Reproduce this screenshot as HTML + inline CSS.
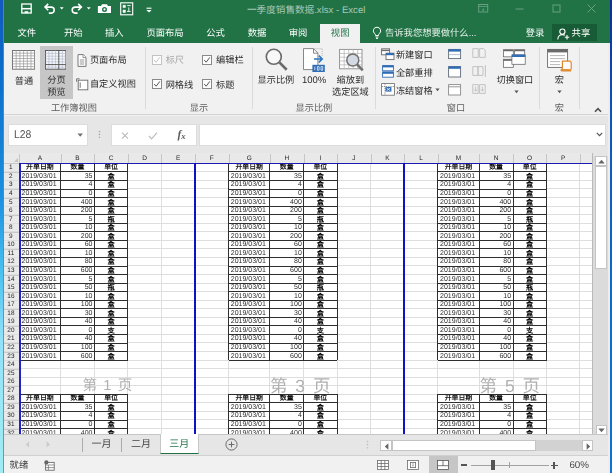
<!DOCTYPE html>
<html lang="zh-CN">
<head>
<meta charset="utf-8">
<title>一季度销售数据.xlsx - Excel</title>
<style>
html,body{margin:0;padding:0;}
body{width:612px;height:473px;overflow:hidden;position:relative;background:#f1f1f1;font-family:"Liberation Sans",sans-serif;font-size:9.4px;color:#333;text-rendering:geometricPrecision;filter:blur(0.4px);}
div,span,svg{position:absolute;box-sizing:border-box;}
.t{white-space:nowrap;line-height:12px;height:12px;}
.ct{text-align:center;}
/* window edges */
#edgeL{left:0;top:0;width:3.8px;height:473px;background:linear-gradient(180deg,#1458c0 0,#0a6ac8 13%,#1a90e0 42%,#45c0f0 57%,#92e2fa 72%,#a0ecf4 100%);border-right:0.7px solid rgba(110,135,145,.85);z-index:5;}
#edgeR{left:610px;top:0;width:2px;height:473px;background:linear-gradient(180deg,#0c2c9a 0,#0a58b8 25%,#0a6cd0 65%,#0a72d8 100%);z-index:5;}
#edgeR2{left:608.4px;top:43px;width:1.6px;height:430px;background:#f2ebe7;z-index:5;}
/* title bar */
#title{left:3.4px;top:0;width:607.6px;height:42.8px;background:#217346;}
#title .cap{left:182.8px;top:5px;width:240px;text-align:center;color:#a9c8b7;font-size:9.6px;}
.tab{top:27.2px;color:#fff;font-size:9.3px;text-align:center;width:50px;}
#tabact{left:316.5px;top:24px;width:40.5px;height:20px;background:#f1f1f1;}
#tabact .t{left:0;top:3.3px;width:40.5px;text-align:center;color:#217346;font-size:9.3px;}
#share{left:548.6px;top:24.4px;width:45.2px;height:16.8px;background:#185c37;}
/* ribbon */
#ribbon{left:3.4px;top:42.8px;width:607.6px;height:72.7px;background:#f1f1f1;border-bottom:1px solid #d4d4d4;}
.sep{width:1px;top:4px;height:62px;background:#dadada;}
.gl{top:58.8px;color:#5d5d5d;font-size:9.2px;text-align:center;width:80px;}
.rl{color:#2b2b2b;font-size:9.2px;}
.cb{width:10px;height:10px;border:1px solid #8a8a8a;background:#fdfdfd;}
.cb.dis{border-color:#c2c2c2;}
/* formula bar */
#fbar{left:3.4px;top:116px;width:607px;height:37px;background:#e6e6e6;}
.wb{background:#fff;border:1px solid #dcdcdc;}
/* sheet */
.sheet{background:#fff;overflow:hidden;}
.colhdr,.rowhdr{background:#e9e9e9;}
.corner{width:0;height:0;border-left:4.5px solid transparent;border-bottom:4.5px solid #c4c4c4;}
.cl{font-size:6.5px;line-height:12.6px;text-align:center;color:#2a2a2a;}
.cs{width:1px;background:#c6c6c6;}
.gv{width:1px;background:#dedede;margin-left:-0.5px;}
.gh{height:1px;background:#dedede;margin-top:-0.5px;}
.rn{left:-0.5px;font-size:6.4px;line-height:8.3px;text-align:center;color:#262626;border-top:1px solid #c9c9c9;}
.c{font-size:7px;line-height:9.8px;height:8.555px;color:#2c2c2c;padding:0 2.2px;white-space:nowrap;overflow:hidden;background:#fff;}
.c.num{font-size:7px;padding-right:1.9px;}
.c.u{font-weight:bold;color:#000;font-size:7.2px;}
.c.hc{font-size:6.9px;font-weight:bold;color:#111;line-height:9.6px;}
.bh{height:0.9px;background:#2e2e2e;}
.bv{width:0.9px;background:#2e2e2e;}
.pg{line-height:24px;color:#b0b0b0;text-align:center;white-space:nowrap;}
.bl{background:#1010c8;}
/* bottom */
#tabbar{left:3.4px;top:434.2px;width:607px;height:21px;background:#e6e6e6;border-top:1px solid #c6c6c6;}
#status{left:3.4px;top:455px;width:607px;height:18px;background:#f1f1f1;border-top:1px solid #d0d0d0;}
#vscroll{left:592.2px;top:153px;width:16.3px;height:282px;background:#dbdbdb;border-left:1.6px solid #b9b9b9;}
.sbtn{background:#fff;border:1px solid #c4c4c4;}
</style>
</head>
<body>
<div id="edgeL"></div><div id="edgeR"></div><div id="edgeR2"></div>

<!-- ===== title bar + tabs ===== -->
<div id="title">
  <!-- quick access toolbar -->
  <svg style="left:16.3px;top:2px" width="150" height="16" viewBox="0 0 150 16" fill="none" stroke="#fff" stroke-width="1.3">
    <!-- save -->
    <rect x="1.8" y="2" width="9.4" height="9"/><path d="M1.8 6.7h9.4" stroke-width="1.5"/><rect x="4.6" y="9.2" width="3.6" height="2" fill="#fff" stroke="none"/>
    <!-- undo -->
    <path d="M28.2 1.9L25 5.1l3.2 3.1M25.4 5.1h5.8a3 3 0 0 1 0 6h-2.4" stroke-width="1.55"/>
    <path d="M39.8 5.3h3.9l-1.95 2.2z" fill="#fff" stroke="none"/>
    <!-- redo -->
    <path d="M58.2 1.9l3.2 3.2-3.2 3.1M61 5.1h-5.8a3 3 0 0 0 0 6h2.4" stroke-width="1.55"/>
    <path d="M66.8 5.3h3.9l-1.95 2.2z" fill="#fff" stroke="none"/>
    <!-- camera -->
    <path d="M77.9 4h3.2l.9-1.8h5l.9 1.8H91v7H77.9z" fill="#fff" stroke="none"/><circle cx="84.5" cy="7.4" r="2.5" fill="#217346" stroke="none"/><circle cx="84.5" cy="7.4" r="1.1" fill="#fff" stroke="none"/>
    <!-- grid icon -->
    <rect x="100.7" y="0.8" width="12" height="12" stroke-width="1.1"/><path d="M103 3.2h2.4v2.4H103zM103 8h2.4v2.4H103z" fill="#fff" stroke-width="0.5"/><path d="M107.2 3.6h3.4M108.8 5.4v3.8M107 9.4h3.6" stroke-width="0.9"/>
    <!-- customize -->
    <path d="M126.5 6.2h5" stroke-width="1.1"/><path d="M126.4 8h5.2l-2.6 2.6z" fill="#fff" stroke="none"/>
  </svg>
  <div class="t cap">一季度销售数据.xlsx - Excel</div>
  <!-- window controls -->
  <svg style="left:471px;top:2.4px" width="130" height="14" viewBox="0 0 130 14" fill="none" stroke="#67a082" stroke-width="1">
    <g transform="translate(1.2 0)"><rect x="3.5" y="2.5" width="9" height="7.5"/><path d="M3.5 4.5h9M8 6v2.6M6.7 7.6L8 9l1.3-1.4" stroke-width="0.8"/></g>
    <path d="M41.5 7h8"/>
    <rect x="79" y="3" width="7" height="7"/>
    <path d="M113.5 2.5l8 8M121.5 2.5l-8 8"/>
  </svg>
  <!-- tabs -->
  <div class="t tab" style="left:-1.7px">文件</div>
  <div class="t tab" style="left:44.8px">开始</div>
  <div class="t tab" style="left:85.8px">插入</div>
  <div class="t tab" style="left:136.6px">页面布局</div>
  <div class="t tab" style="left:187.2px">公式</div>
  <div class="t tab" style="left:228.6px">数据</div>
  <div class="t tab" style="left:269.6px">审阅</div>
  <div id="tabact"><div class="t">视图</div></div>
  <svg style="left:367.4px;top:26.3px" width="12" height="14" viewBox="0 0 12 14" fill="none" stroke="#fff" stroke-width="1"><path d="M6 1.2a3.6 3.6 0 0 0-2.2 6.5c.5.5.7 1 .7 1.8h3c0-.8.2-1.3.7-1.8A3.6 3.6 0 0 0 6 1.2zM4.6 11h2.8M5 12.4h2"/></svg>
  <div class="t tab" style="left:381.6px;width:100px;text-align:left;color:#e4f0e9">告诉我您想要做什么...</div>
  <div class="t tab" style="left:506.6px">登录</div>
  <div id="share">
    <svg style="left:5px;top:3.4px" width="13" height="12" viewBox="0 0 13 12" fill="none" stroke="#fff" stroke-width="1.1"><circle cx="5.4" cy="3.6" r="2.6"/><path d="M0.8 11.4c0-3 2-4.8 4.6-4.8 1 0 1.8.2 2.5.7M10 7v4.4M7.8 9.2h4.4"/></svg>
    <div class="t" style="left:19.6px;top:3px;color:#fff;font-size:9.4px">共享</div>
  </div>
</div>

<!-- ===== ribbon ===== -->
<div id="ribbon"><div id="rin" style="left:0;top:0.7px">
  <!-- 普通 -->
  <svg style="left:8.3px;top:6.5px" width="23.2" height="19.7" viewBox="0 0 23.2 19.7" fill="#fff" stroke="#747474" stroke-width="1"><rect x="0.5" y="0.5" width="22.2" height="18.7"/><path d="M4.20 .5v18.7 M7.90 .5v18.7 M11.60 .5v18.7 M15.30 .5v18.7 M19.00 .5v18.7 M.5 3.17h22.2 M.5 5.84h22.2 M.5 8.51h22.2 M.5 11.19h22.2 M.5 13.86h22.2 M.5 16.53h22.2" stroke="#9c9c9c" stroke-width="0.75"/></svg>
  <div class="t rl ct" style="left:0.5px;top:31.5px;width:40px">普通</div>
  <!-- 分页预览 (selected) -->
  <div style="left:36.8px;top:2.3px;width:32.4px;height:53.4px;background:#c6c6c6"></div>
  <svg style="left:41.7px;top:6.5px" width="21.4" height="19.7" viewBox="0 0 21.4 19.7" fill="#f4f7fb" stroke="#5c5c5c" stroke-width="1"><rect x="0.5" y="0.5" width="20.4" height="18.7"/><path d="M3.9 .5v18.7 M7.2 .5v18.7 M10.5 .5v18.7 M17.4 .5v18.7 M.5 3.4h20.4 M.5 6.2h20.4 M.5 9h20.4 M.5 11.8h20.4 M.5 17.2h20.4" stroke="#b4bccb" stroke-width="0.7"/><path d="M13.8 .5v18.7M.5 14.6h20.4" stroke="#5c5c5c" stroke-width="1"/></svg>
  <div class="t rl ct" style="left:33px;top:30.5px;width:40px">分页</div>
  <div class="t rl ct" style="left:33px;top:42.5px;width:40px">预览</div>
  <!-- 页面布局 -->
  <svg style="left:73.3px;top:10.2px" width="10" height="13" viewBox="0 0 10 13" fill="#fff" stroke="#6a6a6a" stroke-width="0.9"><path d="M1 .6h5.2l2.8 2.8v9H1z"/><path d="M6 .8v2.8h2.8M2.8 6h4.4M2.8 8h4.4M2.8 10h4.4" stroke-width="0.7"/></svg>
  <div class="t rl" style="left:86.5px;top:10.5px">页面布局</div>
  <!-- 自定义视图 -->
  <svg style="left:73px;top:34.5px" width="13" height="13" viewBox="0 0 13 13" fill="none" stroke="#6a6a6a" stroke-width="0.9"><rect x="2.2" y="2.2" width="9.6" height="9.6" fill="#fff"/><path d="M.6 3.8V.8h3M4.2 4.4v5.4"/></svg>
  <div class="t rl" style="left:86.5px;top:35px">自定义视图</div>
  <div class="t gl" style="left:30.5px">工作簿视图</div>
  <div class="sep" style="left:142px"></div>

  <!-- checkboxes -->
  <div class="cb dis" style="left:148.4px;top:11.5px"></div>
  <svg style="left:149.4px;top:12.5px" width="8" height="8" viewBox="0 0 8 8" fill="none" stroke="#c6c6c6" stroke-width="1"><path d="M1.2 4l2 2.2L6.8 1.4"/></svg>
  <div class="t rl" style="left:162.3px;top:11px;color:#a6a6a6">标尺</div>
  <div class="cb" style="left:198.4px;top:11.5px"></div>
  <svg style="left:199.4px;top:12.5px" width="8" height="8" viewBox="0 0 8 8" fill="none" stroke="#555" stroke-width="1"><path d="M1.2 4l2 2.2L6.8 1.4"/></svg>
  <div class="t rl" style="left:212.7px;top:11px">编辑栏</div>
  <div class="cb" style="left:148.4px;top:35.7px"></div>
  <svg style="left:149.4px;top:36.7px" width="8" height="8" viewBox="0 0 8 8" fill="none" stroke="#555" stroke-width="1"><path d="M1.2 4l2 2.2L6.8 1.4"/></svg>
  <div class="t rl" style="left:162.3px;top:35.5px">网格线</div>
  <div class="cb" style="left:198.4px;top:35.7px"></div>
  <svg style="left:199.4px;top:36.7px" width="8" height="8" viewBox="0 0 8 8" fill="none" stroke="#555" stroke-width="1"><path d="M1.2 4l2 2.2L6.8 1.4"/></svg>
  <div class="t rl" style="left:212.7px;top:35.5px">标题</div>
  <div class="t gl" style="left:155.5px">显示</div>
  <div class="sep" style="left:249px"></div>

  <!-- 显示比例 -->
  <svg style="left:260.5px;top:3.6px" width="25" height="25" viewBox="0 0 24 24" fill="none" stroke="#6b6b6b"><circle cx="9.4" cy="9.4" r="7.2" stroke-width="1.6" fill="#f8f8f8"/><path d="M14.8 14.8l7 7" stroke-width="2.6"/></svg>
  <div class="t rl ct" style="left:247.5px;top:31px;width:50px">显示比例</div>
  <!-- 100% -->
  <svg style="left:299px;top:4.5px" width="25" height="25" viewBox="0 0 25 25" fill="none" stroke="#7a7a7a" stroke-width="0.9"><path d="M1.5 .6h10l4.4 4.4v16.6H1.5z" fill="#fff"/><path d="M11.5 .8v4.4h4.2" /><path d="M12.5 .6h7.7v8" stroke="#b0b0b0" stroke-dasharray="1 1"/><path d="M12 11h8M16.8 7.6l3.4 3.4-3.4 3.4" stroke="#2b76c4" stroke-width="1.6"/><rect x="10.4" y="16.8" width="12.4" height="7.2" fill="#2f6db5" stroke="none"/><path d="M12.8 18.6v3.6M15.4 18.6h1.7v3.6h-1.7zM19 18.6h1.7v3.6H19z" stroke="#fff" stroke-width="0.7"/></svg>
  <div class="t rl ct" style="left:285.7px;top:32px;width:50px;font-size:9.5px">100%</div>
  <!-- 缩放到选定区域 -->
  <svg style="left:335.5px;top:5px" width="26" height="25" viewBox="0 0 26 25" fill="none" stroke="#8a8a8a" stroke-width="0.9"><rect x=".6" y="1.4" width="22.4" height="19.4" fill="#fff"/><path d="M.6 5.4h22.4M.6 9.2h22.4M.6 13h22.4M.6 16.8h22.4M5.2 1.4v19.4M9.7 1.4v19.4M14.2 1.4v19.4M18.7 1.4v19.4" stroke="#b0b0b0" stroke-width="0.7"/><circle cx="13.8" cy="12" r="6" fill="#d3dae4" stroke="#707070" stroke-width="1.5"/><path d="M18.2 16.6l5.6 5.8" stroke="#707070" stroke-width="2.5"/></svg>
  <div class="t rl ct" style="left:322px;top:31px;width:50px">缩放到</div>
  <div class="t rl ct" style="left:322px;top:42.5px;width:50px">选定区域</div>
  <div class="t gl" style="left:270.5px">显示比例</div>
  <div class="sep" style="left:371.6px"></div>

  <!-- window group -->
  <svg style="left:377.5px;top:4.7px" width="14" height="13" viewBox="0 0 14 13" fill="#fff" stroke="#6a6a6a" stroke-width="0.9"><rect x=".6" y=".8" width="8" height="6"/><path d="M.6 2.4h8" stroke-width="1.4"/><rect x="5" y="5.2" width="8" height="6.4"/><rect x="5" y="5" width="8" height="2.2" fill="#2f6db5" stroke="none"/></svg>
  <div class="t rl" style="left:392.5px;top:5.4px">新建窗口</div>
  <svg style="left:378.5px;top:22px" width="12" height="13" viewBox="0 0 12 13" fill="#fff" stroke="#2f6db5" stroke-width="0.9"><rect x=".6" y=".6" width="10.8" height="5.2"/><rect x=".6" y=".4" width="10.8" height="2" fill="#2f6db5" stroke="none"/><rect x=".6" y="7" width="10.8" height="5.2"/><rect x=".6" y="6.8" width="10.8" height="2" fill="#2f6db5" stroke="none"/></svg>
  <div class="t rl" style="left:392.5px;top:23.6px">全部重排</div>
  <svg style="left:377.5px;top:39.5px" width="14" height="13" viewBox="0 0 14 13" fill="#fff" stroke="#6a6a6a" stroke-width="0.8"><rect x=".6" y=".6" width="12.8" height="11.6"/><path d="M.6 3.6h12.8M4 .6v11.6" stroke-dasharray="1.2 1"/><rect x="4.4" y="4" width="6" height="4.6" fill="#2f6db5" stroke="none"/><path d="M5.6 5l3.6 2.6M9.2 5L5.6 7.6" stroke="#fff" stroke-width="0.7"/></svg>
  <div class="t rl" style="left:392.5px;top:41.6px">冻结窗格</div>
  <svg style="left:431.5px;top:45px" width="5" height="4" viewBox="0 0 5 4"><path d="M.4.6h4.2L2.5 3.2z" fill="#555"/></svg>

  <svg style="left:444.5px;top:4.4px" width="14" height="48" viewBox="0 0 14 48" fill="#fff" stroke="#5f6b7a" stroke-width="0.9"><rect x=".6" y="1.4" width="12" height="9.2"/><rect x=".6" y="1.2" width="12" height="2.4" fill="#2f6db5" stroke="none"/><path d="M.6 6.6h12" stroke="#9aa7b8" stroke-width="0.7"/><rect x=".6" y="18.6" width="12" height="10.4"/><rect x=".6" y="18.4" width="12" height="2.4" fill="#2f6db5" stroke="none"/><rect x=".6" y="36.6" width="12" height="10.4" stroke="#8a8a8a"/><path d="M.6 38.8h12" stroke="#8a8a8a"/></svg>
  <svg style="left:468.5px;top:4px" width="15" height="48" viewBox="0 0 15 48" fill="none" stroke="#bdbdbd" stroke-width="0.9"><path d="M.8 1.6h5.4v8.8H.8zM7.6 1.6h4l1.6 1.6v7.2H7.6z"/><path d="M.8 19.6h5.2v8.8H.8zM6 19.6h5v8.8H6zM13.4 18v12"/><path d="M.8 37.6h5.4v8.8H.8zM7.6 37.6h5.6v8.8H7.6zM3.6 39.6v4.4M10.4 39.6v4.4M2.2 42.6l1.4 1.6 1.4-1.6M9 42.6l1.4 1.6 1.4-1.6" /></svg>

  <!-- 切换窗口 -->
  <svg style="left:499.2px;top:5.6px" width="24" height="19.6" viewBox="0 0 27 22" fill="#fff" stroke="#6a6a6a" stroke-width="0.9"><rect x=".6" y=".8" width="11" height="8"/><path d="M.6 1.6h11" stroke-width="1.8"/><rect x="13" y=".8" width="11.4" height="8"/><path d="M13 1.6h11.4" stroke-width="1.8"/><rect x=".6" y="11.6" width="11" height="9"/><path d="M.6 12.4h11" stroke-width="1.8"/><rect x="10" y="6.6" width="15" height="10.6"/><rect x="10" y="6.2" width="15" height="2.8" fill="#2f6db5" stroke="none"/></svg>
  <div class="t rl ct" style="left:486.5px;top:31px;width:50px">切换窗口</div>
  <svg style="left:510.3px;top:46.5px" width="5" height="4" viewBox="0 0 5 4"><path d="M.4.6h4.2L2.5 3.2z" fill="#555"/></svg>
  <div class="t gl" style="left:412.5px">窗口</div>
  <div class="sep" style="left:535.2px"></div>

  <!-- 宏 -->
  <svg style="left:544px;top:5px" width="27" height="24" viewBox="0 0 27 24" fill="#fff" stroke="#6a6a6a" stroke-width="0.9"><rect x=".6" y="1.4" width="20" height="18"/><rect x=".6" y="1" width="20" height="3.4" fill="#6a6a6a" stroke="none"/><path d="M3 7.6h15M3 10.6h15M3 13.6h10M3 16.6h10" stroke="#a5a5a5" stroke-width="0.8"/><path d="M15.4 13.2h7.6l1.2 1.2v6.6c-1.6.2-1.6 1.8 0 1.8h-8.8c-1.8 0-1.8-1.8 0-1.8z" fill="#fff" stroke="#e08a2c" stroke-width="1.2"/><path d="M14.4 22h8.4" stroke="#e08a2c" stroke-width="1.8"/></svg>
  <div class="t rl ct" style="left:531px;top:31px;width:50px">宏</div>
  <svg style="left:554px;top:46.5px" width="5" height="4" viewBox="0 0 5 4"><path d="M.4.6h4.2L2.5 3.2z" fill="#555"/></svg>
  <div class="t gl" style="left:516px">宏</div>
  <div class="sep" style="left:575.5px"></div>
  <svg style="left:591px;top:63.2px" width="8" height="6" viewBox="0 0 8 6" fill="none" stroke="#505050" stroke-width="1.6"><path d="M1 4.8l3-3.2 3 3.2"/></svg>
</div></div>

<!-- ===== formula bar ===== -->
<div id="fbar">
  <div class="wb" style="left:4.6px;top:7.6px;width:79.8px;height:22.3px"></div>
  <div class="t" style="left:10.6px;top:12.6px;font-size:11.3px;color:#555;transform:scaleX(0.92);transform-origin:0 0">L28</div>
  <svg style="left:73.6px;top:17px" width="6.4" height="4.4" viewBox="0 0 7 5"><path d="M.4.6h6.2L3.5 4.2z" fill="#707070"/></svg>
  <svg style="left:94.4px;top:14.4px" width="3" height="9" viewBox="0 0 3 9" fill="#a8a8a8"><circle cx="1.5" cy="1.5" r=".8"/><circle cx="1.5" cy="4.4" r=".8"/><circle cx="1.5" cy="7.3" r=".8"/></svg>
  <div class="wb" style="left:107.6px;top:7.7px;width:86px;height:22.2px"></div>
  <svg style="left:117px;top:14.5px" width="70" height="10" viewBox="0 0 70 10" fill="none" stroke="#bcbcbc" stroke-width="1.2"><path d="M2 1.6l6 6M8 1.6l-6 6"/><path d="M29 5l2.6 2.8L37 1.6"/></svg>
  <div class="t" style="left:174.2px;top:12.6px;font-family:'Liberation Serif',serif;font-style:italic;font-weight:bold;font-size:11.5px;color:#5a5a5a;letter-spacing:-0.2px">f<span style="position:relative;font-size:8.6px;top:1px">x</span></div>
  <div class="wb" style="left:196px;top:7.7px;width:407px;height:22px"></div>
  <svg style="left:592.3px;top:15.6px" width="7" height="5" viewBox="0 0 7 5" fill="none" stroke="#555" stroke-width="1.2"><path d="M.8.8l2.7 2.8L6.2.8"/></svg>
</div>

<!-- ===== sheet ===== -->
<div class="sheet" style="left:3.5px;top:153px;width:590.0px;height:282px">
<div class="colhdr" style="left:0;top:0;width:590.0px;height:10.300000000000011px"></div>
<div class="rowhdr" style="left:0;top:10.300000000000011px;width:15.8px;height:271.7px"></div>
<div class="corner" style="left:10.3px;top:4.800000000000011px"></div>
<div class="cl" style="left:15.8px;top:0;width:41.2px;height:10.300000000000011px">A</div>
<div class="cs" style="left:15.8px;top:1px;height:9.300000000000011px"></div>
<div class="cl" style="left:57.0px;top:0;width:33.9px;height:10.300000000000011px">B</div>
<div class="cs" style="left:57.0px;top:1px;height:9.300000000000011px"></div>
<div class="cl" style="left:90.9px;top:0;width:33.3px;height:10.300000000000011px">C</div>
<div class="cs" style="left:90.9px;top:1px;height:9.300000000000011px"></div>
<div class="cl" style="left:124.2px;top:0;width:33.6px;height:10.300000000000011px">D</div>
<div class="cs" style="left:124.2px;top:1px;height:9.300000000000011px"></div>
<div class="cl" style="left:157.8px;top:0;width:33.5px;height:10.300000000000011px">E</div>
<div class="cs" style="left:157.8px;top:1px;height:9.300000000000011px"></div>
<div class="cl" style="left:191.3px;top:0;width:33.8px;height:10.300000000000011px">F</div>
<div class="cs" style="left:191.3px;top:1px;height:9.300000000000011px"></div>
<div class="cl" style="left:225.1px;top:0;width:41.2px;height:10.300000000000011px">G</div>
<div class="cs" style="left:225.1px;top:1px;height:9.300000000000011px"></div>
<div class="cl" style="left:266.3px;top:0;width:33.9px;height:10.300000000000011px">H</div>
<div class="cs" style="left:266.3px;top:1px;height:9.300000000000011px"></div>
<div class="cl" style="left:300.2px;top:0;width:33.3px;height:10.300000000000011px">I</div>
<div class="cs" style="left:300.2px;top:1px;height:9.300000000000011px"></div>
<div class="cl" style="left:333.5px;top:0;width:33.6px;height:10.300000000000011px">J</div>
<div class="cs" style="left:333.5px;top:1px;height:9.300000000000011px"></div>
<div class="cl" style="left:367.1px;top:0;width:33.5px;height:10.300000000000011px">K</div>
<div class="cs" style="left:367.1px;top:1px;height:9.300000000000011px"></div>
<div class="cl" style="left:400.6px;top:0;width:33.8px;height:10.300000000000011px">L</div>
<div class="cs" style="left:400.6px;top:1px;height:9.300000000000011px"></div>
<div class="cl" style="left:434.4px;top:0;width:41.2px;height:10.300000000000011px">M</div>
<div class="cs" style="left:434.4px;top:1px;height:9.300000000000011px"></div>
<div class="cl" style="left:475.6px;top:0;width:33.9px;height:10.300000000000011px">N</div>
<div class="cs" style="left:475.6px;top:1px;height:9.300000000000011px"></div>
<div class="cl" style="left:509.5px;top:0;width:33.3px;height:10.300000000000011px">O</div>
<div class="cs" style="left:509.5px;top:1px;height:9.300000000000011px"></div>
<div class="cl" style="left:542.8px;top:0;width:33.6px;height:10.300000000000011px">P</div>
<div class="cs" style="left:542.8px;top:1px;height:9.300000000000011px"></div>
<div class="cs" style="left:576.4px;top:1px;height:9.300000000000011px"></div>
<div class="gv" style="left:57.0px;top:10.300000000000011px;height:271.7px"></div>
<div class="gv" style="left:90.9px;top:10.300000000000011px;height:271.7px"></div>
<div class="gv" style="left:124.2px;top:10.300000000000011px;height:271.7px"></div>
<div class="gv" style="left:157.8px;top:10.300000000000011px;height:271.7px"></div>
<div class="gv" style="left:191.3px;top:10.300000000000011px;height:271.7px"></div>
<div class="gv" style="left:225.1px;top:10.300000000000011px;height:271.7px"></div>
<div class="gv" style="left:266.3px;top:10.300000000000011px;height:271.7px"></div>
<div class="gv" style="left:300.2px;top:10.300000000000011px;height:271.7px"></div>
<div class="gv" style="left:333.5px;top:10.300000000000011px;height:271.7px"></div>
<div class="gv" style="left:367.1px;top:10.300000000000011px;height:271.7px"></div>
<div class="gv" style="left:400.6px;top:10.300000000000011px;height:271.7px"></div>
<div class="gv" style="left:434.4px;top:10.300000000000011px;height:271.7px"></div>
<div class="gv" style="left:475.6px;top:10.300000000000011px;height:271.7px"></div>
<div class="gv" style="left:509.5px;top:10.300000000000011px;height:271.7px"></div>
<div class="gv" style="left:542.8px;top:10.300000000000011px;height:271.7px"></div>
<div class="gv" style="left:576.4px;top:10.300000000000011px;height:271.7px"></div>
<div class="rn" style="top:10.30px;height:8.55px;width:15.8px">1</div>
<div class="rn" style="top:18.86px;height:8.55px;width:15.8px">2</div>
<div class="gh" style="top:18.86px;left:0;width:590.0px"></div>
<div class="rn" style="top:27.41px;height:8.55px;width:15.8px">3</div>
<div class="gh" style="top:27.41px;left:0;width:590.0px"></div>
<div class="rn" style="top:35.97px;height:8.55px;width:15.8px">4</div>
<div class="gh" style="top:35.97px;left:0;width:590.0px"></div>
<div class="rn" style="top:44.52px;height:8.55px;width:15.8px">5</div>
<div class="gh" style="top:44.52px;left:0;width:590.0px"></div>
<div class="rn" style="top:53.08px;height:8.55px;width:15.8px">6</div>
<div class="gh" style="top:53.08px;left:0;width:590.0px"></div>
<div class="rn" style="top:61.63px;height:8.55px;width:15.8px">7</div>
<div class="gh" style="top:61.63px;left:0;width:590.0px"></div>
<div class="rn" style="top:70.19px;height:8.55px;width:15.8px">8</div>
<div class="gh" style="top:70.19px;left:0;width:590.0px"></div>
<div class="rn" style="top:78.74px;height:8.55px;width:15.8px">9</div>
<div class="gh" style="top:78.74px;left:0;width:590.0px"></div>
<div class="rn" style="top:87.30px;height:8.55px;width:15.8px">10</div>
<div class="gh" style="top:87.30px;left:0;width:590.0px"></div>
<div class="rn" style="top:95.85px;height:8.55px;width:15.8px">11</div>
<div class="gh" style="top:95.85px;left:0;width:590.0px"></div>
<div class="rn" style="top:104.40px;height:8.55px;width:15.8px">12</div>
<div class="gh" style="top:104.40px;left:0;width:590.0px"></div>
<div class="rn" style="top:112.96px;height:8.55px;width:15.8px">13</div>
<div class="gh" style="top:112.96px;left:0;width:590.0px"></div>
<div class="rn" style="top:121.51px;height:8.55px;width:15.8px">14</div>
<div class="gh" style="top:121.51px;left:0;width:590.0px"></div>
<div class="rn" style="top:130.07px;height:8.55px;width:15.8px">15</div>
<div class="gh" style="top:130.07px;left:0;width:590.0px"></div>
<div class="rn" style="top:138.62px;height:8.55px;width:15.8px">16</div>
<div class="gh" style="top:138.62px;left:0;width:590.0px"></div>
<div class="rn" style="top:147.18px;height:8.55px;width:15.8px">17</div>
<div class="gh" style="top:147.18px;left:0;width:590.0px"></div>
<div class="rn" style="top:155.74px;height:8.55px;width:15.8px">18</div>
<div class="gh" style="top:155.74px;left:0;width:590.0px"></div>
<div class="rn" style="top:164.29px;height:8.55px;width:15.8px">19</div>
<div class="gh" style="top:164.29px;left:0;width:590.0px"></div>
<div class="rn" style="top:172.85px;height:8.55px;width:15.8px">20</div>
<div class="gh" style="top:172.85px;left:0;width:590.0px"></div>
<div class="rn" style="top:181.40px;height:8.55px;width:15.8px">21</div>
<div class="gh" style="top:181.40px;left:0;width:590.0px"></div>
<div class="rn" style="top:189.96px;height:8.55px;width:15.8px">22</div>
<div class="gh" style="top:189.96px;left:0;width:590.0px"></div>
<div class="rn" style="top:198.51px;height:8.55px;width:15.8px">23</div>
<div class="gh" style="top:198.51px;left:0;width:590.0px"></div>
<div class="rn" style="top:207.06px;height:8.55px;width:15.8px">24</div>
<div class="gh" style="top:207.06px;left:0;width:590.0px"></div>
<div class="rn" style="top:215.62px;height:8.55px;width:15.8px">25</div>
<div class="gh" style="top:215.62px;left:0;width:590.0px"></div>
<div class="rn" style="top:224.18px;height:8.55px;width:15.8px">26</div>
<div class="gh" style="top:224.18px;left:0;width:590.0px"></div>
<div class="rn" style="top:232.73px;height:8.55px;width:15.8px">27</div>
<div class="gh" style="top:232.73px;left:0;width:590.0px"></div>
<div class="rn" style="top:241.28px;height:8.55px;width:15.8px">28</div>
<div class="gh" style="top:241.28px;left:0;width:590.0px"></div>
<div class="rn" style="top:249.84px;height:8.55px;width:15.8px">29</div>
<div class="gh" style="top:249.84px;left:0;width:590.0px"></div>
<div class="rn" style="top:258.39px;height:8.55px;width:15.8px">30</div>
<div class="gh" style="top:258.39px;left:0;width:590.0px"></div>
<div class="rn" style="top:266.95px;height:8.55px;width:15.8px">31</div>
<div class="gh" style="top:266.95px;left:0;width:590.0px"></div>
<div class="rn" style="top:275.50px;height:6.50px;width:15.8px">32</div>
<div class="gh" style="top:275.50px;left:0;width:590.0px"></div>
<div class="c hc" style="left:15.8px;top:10.30px;width:41.2px;text-align:center">开单日期</div>
<div class="c hc " style="left:57.0px;top:10.30px;width:33.9px;text-align:center">数量</div>
<div class="c hc " style="left:90.9px;top:10.30px;width:33.3px;text-align:center">单位</div>
<div class="c " style="left:15.8px;top:18.86px;width:41.2px;text-align:left">2019/03/01</div>
<div class="c  num" style="left:57.0px;top:18.86px;width:33.9px;text-align:right">35</div>
<div class="c  u" style="left:90.9px;top:18.86px;width:33.3px;text-align:center">盒</div>
<div class="c " style="left:15.8px;top:27.41px;width:41.2px;text-align:left">2019/03/01</div>
<div class="c  num" style="left:57.0px;top:27.41px;width:33.9px;text-align:right">4</div>
<div class="c  u" style="left:90.9px;top:27.41px;width:33.3px;text-align:center">盒</div>
<div class="c " style="left:15.8px;top:35.97px;width:41.2px;text-align:left">2019/03/01</div>
<div class="c  num" style="left:57.0px;top:35.97px;width:33.9px;text-align:right">0</div>
<div class="c  u" style="left:90.9px;top:35.97px;width:33.3px;text-align:center">盒</div>
<div class="c " style="left:15.8px;top:44.52px;width:41.2px;text-align:left">2019/03/01</div>
<div class="c  num" style="left:57.0px;top:44.52px;width:33.9px;text-align:right">400</div>
<div class="c  u" style="left:90.9px;top:44.52px;width:33.3px;text-align:center">盒</div>
<div class="c " style="left:15.8px;top:53.08px;width:41.2px;text-align:left">2019/03/01</div>
<div class="c  num" style="left:57.0px;top:53.08px;width:33.9px;text-align:right">200</div>
<div class="c  u" style="left:90.9px;top:53.08px;width:33.3px;text-align:center">盒</div>
<div class="c " style="left:15.8px;top:61.63px;width:41.2px;text-align:left">2019/03/01</div>
<div class="c  num" style="left:57.0px;top:61.63px;width:33.9px;text-align:right">5</div>
<div class="c  u" style="left:90.9px;top:61.63px;width:33.3px;text-align:center">瓶</div>
<div class="c " style="left:15.8px;top:70.19px;width:41.2px;text-align:left">2019/03/01</div>
<div class="c  num" style="left:57.0px;top:70.19px;width:33.9px;text-align:right">10</div>
<div class="c  u" style="left:90.9px;top:70.19px;width:33.3px;text-align:center">盒</div>
<div class="c " style="left:15.8px;top:78.74px;width:41.2px;text-align:left">2019/03/01</div>
<div class="c  num" style="left:57.0px;top:78.74px;width:33.9px;text-align:right">200</div>
<div class="c  u" style="left:90.9px;top:78.74px;width:33.3px;text-align:center">盒</div>
<div class="c " style="left:15.8px;top:87.30px;width:41.2px;text-align:left">2019/03/01</div>
<div class="c  num" style="left:57.0px;top:87.30px;width:33.9px;text-align:right">60</div>
<div class="c  u" style="left:90.9px;top:87.30px;width:33.3px;text-align:center">盒</div>
<div class="c " style="left:15.8px;top:95.85px;width:41.2px;text-align:left">2019/03/01</div>
<div class="c  num" style="left:57.0px;top:95.85px;width:33.9px;text-align:right">10</div>
<div class="c  u" style="left:90.9px;top:95.85px;width:33.3px;text-align:center">盒</div>
<div class="c " style="left:15.8px;top:104.40px;width:41.2px;text-align:left">2019/03/01</div>
<div class="c  num" style="left:57.0px;top:104.40px;width:33.9px;text-align:right">80</div>
<div class="c  u" style="left:90.9px;top:104.40px;width:33.3px;text-align:center">盒</div>
<div class="c " style="left:15.8px;top:112.96px;width:41.2px;text-align:left">2019/03/01</div>
<div class="c  num" style="left:57.0px;top:112.96px;width:33.9px;text-align:right">600</div>
<div class="c  u" style="left:90.9px;top:112.96px;width:33.3px;text-align:center">盒</div>
<div class="c " style="left:15.8px;top:121.51px;width:41.2px;text-align:left">2019/03/01</div>
<div class="c  num" style="left:57.0px;top:121.51px;width:33.9px;text-align:right">5</div>
<div class="c  u" style="left:90.9px;top:121.51px;width:33.3px;text-align:center">盒</div>
<div class="c " style="left:15.8px;top:130.07px;width:41.2px;text-align:left">2019/03/01</div>
<div class="c  num" style="left:57.0px;top:130.07px;width:33.9px;text-align:right">50</div>
<div class="c  u" style="left:90.9px;top:130.07px;width:33.3px;text-align:center">瓶</div>
<div class="c " style="left:15.8px;top:138.62px;width:41.2px;text-align:left">2019/03/01</div>
<div class="c  num" style="left:57.0px;top:138.62px;width:33.9px;text-align:right">10</div>
<div class="c  u" style="left:90.9px;top:138.62px;width:33.3px;text-align:center">盒</div>
<div class="c " style="left:15.8px;top:147.18px;width:41.2px;text-align:left">2019/03/01</div>
<div class="c  num" style="left:57.0px;top:147.18px;width:33.9px;text-align:right">100</div>
<div class="c  u" style="left:90.9px;top:147.18px;width:33.3px;text-align:center">盒</div>
<div class="c " style="left:15.8px;top:155.74px;width:41.2px;text-align:left">2019/03/01</div>
<div class="c  num" style="left:57.0px;top:155.74px;width:33.9px;text-align:right">30</div>
<div class="c  u" style="left:90.9px;top:155.74px;width:33.3px;text-align:center">盒</div>
<div class="c " style="left:15.8px;top:164.29px;width:41.2px;text-align:left">2019/03/01</div>
<div class="c  num" style="left:57.0px;top:164.29px;width:33.9px;text-align:right">40</div>
<div class="c  u" style="left:90.9px;top:164.29px;width:33.3px;text-align:center">盒</div>
<div class="c " style="left:15.8px;top:172.85px;width:41.2px;text-align:left">2019/03/01</div>
<div class="c  num" style="left:57.0px;top:172.85px;width:33.9px;text-align:right">0</div>
<div class="c  u" style="left:90.9px;top:172.85px;width:33.3px;text-align:center">支</div>
<div class="c " style="left:15.8px;top:181.40px;width:41.2px;text-align:left">2019/03/01</div>
<div class="c  num" style="left:57.0px;top:181.40px;width:33.9px;text-align:right">40</div>
<div class="c  u" style="left:90.9px;top:181.40px;width:33.3px;text-align:center">盒</div>
<div class="c " style="left:15.8px;top:189.96px;width:41.2px;text-align:left">2019/03/01</div>
<div class="c  num" style="left:57.0px;top:189.96px;width:33.9px;text-align:right">100</div>
<div class="c  u" style="left:90.9px;top:189.96px;width:33.3px;text-align:center">盒</div>
<div class="c " style="left:15.8px;top:198.51px;width:41.2px;text-align:left">2019/03/01</div>
<div class="c  num" style="left:57.0px;top:198.51px;width:33.9px;text-align:right">600</div>
<div class="c  u" style="left:90.9px;top:198.51px;width:33.3px;text-align:center">盒</div>
<div class="bh" style="left:15.8px;top:9.85px;width:108.9px"></div>
<div class="bh" style="left:15.8px;top:18.41px;width:108.9px"></div>
<div class="bh" style="left:15.8px;top:26.96px;width:108.9px"></div>
<div class="bh" style="left:15.8px;top:35.52px;width:108.9px"></div>
<div class="bh" style="left:15.8px;top:44.07px;width:108.9px"></div>
<div class="bh" style="left:15.8px;top:52.63px;width:108.9px"></div>
<div class="bh" style="left:15.8px;top:61.18px;width:108.9px"></div>
<div class="bh" style="left:15.8px;top:69.73px;width:108.9px"></div>
<div class="bh" style="left:15.8px;top:78.29px;width:108.9px"></div>
<div class="bh" style="left:15.8px;top:86.85px;width:108.9px"></div>
<div class="bh" style="left:15.8px;top:95.40px;width:108.9px"></div>
<div class="bh" style="left:15.8px;top:103.95px;width:108.9px"></div>
<div class="bh" style="left:15.8px;top:112.51px;width:108.9px"></div>
<div class="bh" style="left:15.8px;top:121.07px;width:108.9px"></div>
<div class="bh" style="left:15.8px;top:129.62px;width:108.9px"></div>
<div class="bh" style="left:15.8px;top:138.18px;width:108.9px"></div>
<div class="bh" style="left:15.8px;top:146.73px;width:108.9px"></div>
<div class="bh" style="left:15.8px;top:155.29px;width:108.9px"></div>
<div class="bh" style="left:15.8px;top:163.84px;width:108.9px"></div>
<div class="bh" style="left:15.8px;top:172.40px;width:108.9px"></div>
<div class="bh" style="left:15.8px;top:180.95px;width:108.9px"></div>
<div class="bh" style="left:15.8px;top:189.51px;width:108.9px"></div>
<div class="bh" style="left:15.8px;top:198.06px;width:108.9px"></div>
<div class="bh" style="left:15.8px;top:206.62px;width:108.9px"></div>
<div class="bv" style="left:15.35px;top:10.30px;height:196.76px"></div>
<div class="bv" style="left:56.55px;top:10.30px;height:196.76px"></div>
<div class="bv" style="left:90.45px;top:10.30px;height:196.76px"></div>
<div class="bv" style="left:123.75px;top:10.30px;height:196.76px"></div>
<div class="c hc" style="left:15.8px;top:241.28px;width:41.2px;text-align:center">开单日期</div>
<div class="c hc " style="left:57.0px;top:241.28px;width:33.9px;text-align:center">数量</div>
<div class="c hc " style="left:90.9px;top:241.28px;width:33.3px;text-align:center">单位</div>
<div class="c " style="left:15.8px;top:249.84px;width:41.2px;text-align:left">2019/03/01</div>
<div class="c  num" style="left:57.0px;top:249.84px;width:33.9px;text-align:right">35</div>
<div class="c  u" style="left:90.9px;top:249.84px;width:33.3px;text-align:center">盒</div>
<div class="c " style="left:15.8px;top:258.39px;width:41.2px;text-align:left">2019/03/01</div>
<div class="c  num" style="left:57.0px;top:258.39px;width:33.9px;text-align:right">4</div>
<div class="c  u" style="left:90.9px;top:258.39px;width:33.3px;text-align:center">盒</div>
<div class="c " style="left:15.8px;top:266.95px;width:41.2px;text-align:left">2019/03/01</div>
<div class="c  num" style="left:57.0px;top:266.95px;width:33.9px;text-align:right">0</div>
<div class="c  u" style="left:90.9px;top:266.95px;width:33.3px;text-align:center">盒</div>
<div class="c " style="left:15.8px;top:275.50px;width:41.2px;text-align:left">2019/03/01</div>
<div class="c  num" style="left:57.0px;top:275.50px;width:33.9px;text-align:right">400</div>
<div class="c  u" style="left:90.9px;top:275.50px;width:33.3px;text-align:center">盒</div>
<div class="bh" style="left:15.8px;top:240.83px;width:108.9px"></div>
<div class="bh" style="left:15.8px;top:249.39px;width:108.9px"></div>
<div class="bh" style="left:15.8px;top:257.94px;width:108.9px"></div>
<div class="bh" style="left:15.8px;top:266.50px;width:108.9px"></div>
<div class="bh" style="left:15.8px;top:275.06px;width:108.9px"></div>
<div class="bv" style="left:15.35px;top:241.28px;height:40.72px"></div>
<div class="bv" style="left:56.55px;top:241.28px;height:40.72px"></div>
<div class="bv" style="left:90.45px;top:241.28px;height:40.72px"></div>
<div class="bv" style="left:123.75px;top:241.28px;height:40.72px"></div>
<div class="c hc" style="left:225.1px;top:10.30px;width:41.2px;text-align:center">开单日期</div>
<div class="c hc " style="left:266.3px;top:10.30px;width:33.9px;text-align:center">数量</div>
<div class="c hc " style="left:300.2px;top:10.30px;width:33.3px;text-align:center">单位</div>
<div class="c " style="left:225.1px;top:18.86px;width:41.2px;text-align:left">2019/03/01</div>
<div class="c  num" style="left:266.3px;top:18.86px;width:33.9px;text-align:right">35</div>
<div class="c  u" style="left:300.2px;top:18.86px;width:33.3px;text-align:center">盒</div>
<div class="c " style="left:225.1px;top:27.41px;width:41.2px;text-align:left">2019/03/01</div>
<div class="c  num" style="left:266.3px;top:27.41px;width:33.9px;text-align:right">4</div>
<div class="c  u" style="left:300.2px;top:27.41px;width:33.3px;text-align:center">盒</div>
<div class="c " style="left:225.1px;top:35.97px;width:41.2px;text-align:left">2019/03/01</div>
<div class="c  num" style="left:266.3px;top:35.97px;width:33.9px;text-align:right">0</div>
<div class="c  u" style="left:300.2px;top:35.97px;width:33.3px;text-align:center">盒</div>
<div class="c " style="left:225.1px;top:44.52px;width:41.2px;text-align:left">2019/03/01</div>
<div class="c  num" style="left:266.3px;top:44.52px;width:33.9px;text-align:right">400</div>
<div class="c  u" style="left:300.2px;top:44.52px;width:33.3px;text-align:center">盒</div>
<div class="c " style="left:225.1px;top:53.08px;width:41.2px;text-align:left">2019/03/01</div>
<div class="c  num" style="left:266.3px;top:53.08px;width:33.9px;text-align:right">200</div>
<div class="c  u" style="left:300.2px;top:53.08px;width:33.3px;text-align:center">盒</div>
<div class="c " style="left:225.1px;top:61.63px;width:41.2px;text-align:left">2019/03/01</div>
<div class="c  num" style="left:266.3px;top:61.63px;width:33.9px;text-align:right">5</div>
<div class="c  u" style="left:300.2px;top:61.63px;width:33.3px;text-align:center">瓶</div>
<div class="c " style="left:225.1px;top:70.19px;width:41.2px;text-align:left">2019/03/01</div>
<div class="c  num" style="left:266.3px;top:70.19px;width:33.9px;text-align:right">10</div>
<div class="c  u" style="left:300.2px;top:70.19px;width:33.3px;text-align:center">盒</div>
<div class="c " style="left:225.1px;top:78.74px;width:41.2px;text-align:left">2019/03/01</div>
<div class="c  num" style="left:266.3px;top:78.74px;width:33.9px;text-align:right">200</div>
<div class="c  u" style="left:300.2px;top:78.74px;width:33.3px;text-align:center">盒</div>
<div class="c " style="left:225.1px;top:87.30px;width:41.2px;text-align:left">2019/03/01</div>
<div class="c  num" style="left:266.3px;top:87.30px;width:33.9px;text-align:right">60</div>
<div class="c  u" style="left:300.2px;top:87.30px;width:33.3px;text-align:center">盒</div>
<div class="c " style="left:225.1px;top:95.85px;width:41.2px;text-align:left">2019/03/01</div>
<div class="c  num" style="left:266.3px;top:95.85px;width:33.9px;text-align:right">10</div>
<div class="c  u" style="left:300.2px;top:95.85px;width:33.3px;text-align:center">盒</div>
<div class="c " style="left:225.1px;top:104.40px;width:41.2px;text-align:left">2019/03/01</div>
<div class="c  num" style="left:266.3px;top:104.40px;width:33.9px;text-align:right">80</div>
<div class="c  u" style="left:300.2px;top:104.40px;width:33.3px;text-align:center">盒</div>
<div class="c " style="left:225.1px;top:112.96px;width:41.2px;text-align:left">2019/03/01</div>
<div class="c  num" style="left:266.3px;top:112.96px;width:33.9px;text-align:right">600</div>
<div class="c  u" style="left:300.2px;top:112.96px;width:33.3px;text-align:center">盒</div>
<div class="c " style="left:225.1px;top:121.51px;width:41.2px;text-align:left">2019/03/01</div>
<div class="c  num" style="left:266.3px;top:121.51px;width:33.9px;text-align:right">5</div>
<div class="c  u" style="left:300.2px;top:121.51px;width:33.3px;text-align:center">盒</div>
<div class="c " style="left:225.1px;top:130.07px;width:41.2px;text-align:left">2019/03/01</div>
<div class="c  num" style="left:266.3px;top:130.07px;width:33.9px;text-align:right">50</div>
<div class="c  u" style="left:300.2px;top:130.07px;width:33.3px;text-align:center">瓶</div>
<div class="c " style="left:225.1px;top:138.62px;width:41.2px;text-align:left">2019/03/01</div>
<div class="c  num" style="left:266.3px;top:138.62px;width:33.9px;text-align:right">10</div>
<div class="c  u" style="left:300.2px;top:138.62px;width:33.3px;text-align:center">盒</div>
<div class="c " style="left:225.1px;top:147.18px;width:41.2px;text-align:left">2019/03/01</div>
<div class="c  num" style="left:266.3px;top:147.18px;width:33.9px;text-align:right">100</div>
<div class="c  u" style="left:300.2px;top:147.18px;width:33.3px;text-align:center">盒</div>
<div class="c " style="left:225.1px;top:155.74px;width:41.2px;text-align:left">2019/03/01</div>
<div class="c  num" style="left:266.3px;top:155.74px;width:33.9px;text-align:right">30</div>
<div class="c  u" style="left:300.2px;top:155.74px;width:33.3px;text-align:center">盒</div>
<div class="c " style="left:225.1px;top:164.29px;width:41.2px;text-align:left">2019/03/01</div>
<div class="c  num" style="left:266.3px;top:164.29px;width:33.9px;text-align:right">40</div>
<div class="c  u" style="left:300.2px;top:164.29px;width:33.3px;text-align:center">盒</div>
<div class="c " style="left:225.1px;top:172.85px;width:41.2px;text-align:left">2019/03/01</div>
<div class="c  num" style="left:266.3px;top:172.85px;width:33.9px;text-align:right">0</div>
<div class="c  u" style="left:300.2px;top:172.85px;width:33.3px;text-align:center">支</div>
<div class="c " style="left:225.1px;top:181.40px;width:41.2px;text-align:left">2019/03/01</div>
<div class="c  num" style="left:266.3px;top:181.40px;width:33.9px;text-align:right">40</div>
<div class="c  u" style="left:300.2px;top:181.40px;width:33.3px;text-align:center">盒</div>
<div class="c " style="left:225.1px;top:189.96px;width:41.2px;text-align:left">2019/03/01</div>
<div class="c  num" style="left:266.3px;top:189.96px;width:33.9px;text-align:right">100</div>
<div class="c  u" style="left:300.2px;top:189.96px;width:33.3px;text-align:center">盒</div>
<div class="c " style="left:225.1px;top:198.51px;width:41.2px;text-align:left">2019/03/01</div>
<div class="c  num" style="left:266.3px;top:198.51px;width:33.9px;text-align:right">600</div>
<div class="c  u" style="left:300.2px;top:198.51px;width:33.3px;text-align:center">盒</div>
<div class="bh" style="left:225.1px;top:9.85px;width:108.9px"></div>
<div class="bh" style="left:225.1px;top:18.41px;width:108.9px"></div>
<div class="bh" style="left:225.1px;top:26.96px;width:108.9px"></div>
<div class="bh" style="left:225.1px;top:35.52px;width:108.9px"></div>
<div class="bh" style="left:225.1px;top:44.07px;width:108.9px"></div>
<div class="bh" style="left:225.1px;top:52.63px;width:108.9px"></div>
<div class="bh" style="left:225.1px;top:61.18px;width:108.9px"></div>
<div class="bh" style="left:225.1px;top:69.73px;width:108.9px"></div>
<div class="bh" style="left:225.1px;top:78.29px;width:108.9px"></div>
<div class="bh" style="left:225.1px;top:86.85px;width:108.9px"></div>
<div class="bh" style="left:225.1px;top:95.40px;width:108.9px"></div>
<div class="bh" style="left:225.1px;top:103.95px;width:108.9px"></div>
<div class="bh" style="left:225.1px;top:112.51px;width:108.9px"></div>
<div class="bh" style="left:225.1px;top:121.07px;width:108.9px"></div>
<div class="bh" style="left:225.1px;top:129.62px;width:108.9px"></div>
<div class="bh" style="left:225.1px;top:138.18px;width:108.9px"></div>
<div class="bh" style="left:225.1px;top:146.73px;width:108.9px"></div>
<div class="bh" style="left:225.1px;top:155.29px;width:108.9px"></div>
<div class="bh" style="left:225.1px;top:163.84px;width:108.9px"></div>
<div class="bh" style="left:225.1px;top:172.40px;width:108.9px"></div>
<div class="bh" style="left:225.1px;top:180.95px;width:108.9px"></div>
<div class="bh" style="left:225.1px;top:189.51px;width:108.9px"></div>
<div class="bh" style="left:225.1px;top:198.06px;width:108.9px"></div>
<div class="bh" style="left:225.1px;top:206.62px;width:108.9px"></div>
<div class="bv" style="left:224.65px;top:10.30px;height:196.76px"></div>
<div class="bv" style="left:265.85px;top:10.30px;height:196.76px"></div>
<div class="bv" style="left:299.75px;top:10.30px;height:196.76px"></div>
<div class="bv" style="left:333.05px;top:10.30px;height:196.76px"></div>
<div class="c hc" style="left:225.1px;top:241.28px;width:41.2px;text-align:center">开单日期</div>
<div class="c hc " style="left:266.3px;top:241.28px;width:33.9px;text-align:center">数量</div>
<div class="c hc " style="left:300.2px;top:241.28px;width:33.3px;text-align:center">单位</div>
<div class="c " style="left:225.1px;top:249.84px;width:41.2px;text-align:left">2019/03/01</div>
<div class="c  num" style="left:266.3px;top:249.84px;width:33.9px;text-align:right">35</div>
<div class="c  u" style="left:300.2px;top:249.84px;width:33.3px;text-align:center">盒</div>
<div class="c " style="left:225.1px;top:258.39px;width:41.2px;text-align:left">2019/03/01</div>
<div class="c  num" style="left:266.3px;top:258.39px;width:33.9px;text-align:right">4</div>
<div class="c  u" style="left:300.2px;top:258.39px;width:33.3px;text-align:center">盒</div>
<div class="c " style="left:225.1px;top:266.95px;width:41.2px;text-align:left">2019/03/01</div>
<div class="c  num" style="left:266.3px;top:266.95px;width:33.9px;text-align:right">0</div>
<div class="c  u" style="left:300.2px;top:266.95px;width:33.3px;text-align:center">盒</div>
<div class="c " style="left:225.1px;top:275.50px;width:41.2px;text-align:left">2019/03/01</div>
<div class="c  num" style="left:266.3px;top:275.50px;width:33.9px;text-align:right">400</div>
<div class="c  u" style="left:300.2px;top:275.50px;width:33.3px;text-align:center">盒</div>
<div class="bh" style="left:225.1px;top:240.83px;width:108.9px"></div>
<div class="bh" style="left:225.1px;top:249.39px;width:108.9px"></div>
<div class="bh" style="left:225.1px;top:257.94px;width:108.9px"></div>
<div class="bh" style="left:225.1px;top:266.50px;width:108.9px"></div>
<div class="bh" style="left:225.1px;top:275.06px;width:108.9px"></div>
<div class="bv" style="left:224.65px;top:241.28px;height:40.72px"></div>
<div class="bv" style="left:265.85px;top:241.28px;height:40.72px"></div>
<div class="bv" style="left:299.75px;top:241.28px;height:40.72px"></div>
<div class="bv" style="left:333.05px;top:241.28px;height:40.72px"></div>
<div class="c hc" style="left:434.4px;top:10.30px;width:41.2px;text-align:center">开单日期</div>
<div class="c hc " style="left:475.6px;top:10.30px;width:33.9px;text-align:center">数量</div>
<div class="c hc " style="left:509.5px;top:10.30px;width:33.3px;text-align:center">单位</div>
<div class="c " style="left:434.4px;top:18.86px;width:41.2px;text-align:left">2019/03/01</div>
<div class="c  num" style="left:475.6px;top:18.86px;width:33.9px;text-align:right">35</div>
<div class="c  u" style="left:509.5px;top:18.86px;width:33.3px;text-align:center">盒</div>
<div class="c " style="left:434.4px;top:27.41px;width:41.2px;text-align:left">2019/03/01</div>
<div class="c  num" style="left:475.6px;top:27.41px;width:33.9px;text-align:right">4</div>
<div class="c  u" style="left:509.5px;top:27.41px;width:33.3px;text-align:center">盒</div>
<div class="c " style="left:434.4px;top:35.97px;width:41.2px;text-align:left">2019/03/01</div>
<div class="c  num" style="left:475.6px;top:35.97px;width:33.9px;text-align:right">0</div>
<div class="c  u" style="left:509.5px;top:35.97px;width:33.3px;text-align:center">盒</div>
<div class="c " style="left:434.4px;top:44.52px;width:41.2px;text-align:left">2019/03/01</div>
<div class="c  num" style="left:475.6px;top:44.52px;width:33.9px;text-align:right">400</div>
<div class="c  u" style="left:509.5px;top:44.52px;width:33.3px;text-align:center">盒</div>
<div class="c " style="left:434.4px;top:53.08px;width:41.2px;text-align:left">2019/03/01</div>
<div class="c  num" style="left:475.6px;top:53.08px;width:33.9px;text-align:right">200</div>
<div class="c  u" style="left:509.5px;top:53.08px;width:33.3px;text-align:center">盒</div>
<div class="c " style="left:434.4px;top:61.63px;width:41.2px;text-align:left">2019/03/01</div>
<div class="c  num" style="left:475.6px;top:61.63px;width:33.9px;text-align:right">5</div>
<div class="c  u" style="left:509.5px;top:61.63px;width:33.3px;text-align:center">瓶</div>
<div class="c " style="left:434.4px;top:70.19px;width:41.2px;text-align:left">2019/03/01</div>
<div class="c  num" style="left:475.6px;top:70.19px;width:33.9px;text-align:right">10</div>
<div class="c  u" style="left:509.5px;top:70.19px;width:33.3px;text-align:center">盒</div>
<div class="c " style="left:434.4px;top:78.74px;width:41.2px;text-align:left">2019/03/01</div>
<div class="c  num" style="left:475.6px;top:78.74px;width:33.9px;text-align:right">200</div>
<div class="c  u" style="left:509.5px;top:78.74px;width:33.3px;text-align:center">盒</div>
<div class="c " style="left:434.4px;top:87.30px;width:41.2px;text-align:left">2019/03/01</div>
<div class="c  num" style="left:475.6px;top:87.30px;width:33.9px;text-align:right">60</div>
<div class="c  u" style="left:509.5px;top:87.30px;width:33.3px;text-align:center">盒</div>
<div class="c " style="left:434.4px;top:95.85px;width:41.2px;text-align:left">2019/03/01</div>
<div class="c  num" style="left:475.6px;top:95.85px;width:33.9px;text-align:right">10</div>
<div class="c  u" style="left:509.5px;top:95.85px;width:33.3px;text-align:center">盒</div>
<div class="c " style="left:434.4px;top:104.40px;width:41.2px;text-align:left">2019/03/01</div>
<div class="c  num" style="left:475.6px;top:104.40px;width:33.9px;text-align:right">80</div>
<div class="c  u" style="left:509.5px;top:104.40px;width:33.3px;text-align:center">盒</div>
<div class="c " style="left:434.4px;top:112.96px;width:41.2px;text-align:left">2019/03/01</div>
<div class="c  num" style="left:475.6px;top:112.96px;width:33.9px;text-align:right">600</div>
<div class="c  u" style="left:509.5px;top:112.96px;width:33.3px;text-align:center">盒</div>
<div class="c " style="left:434.4px;top:121.51px;width:41.2px;text-align:left">2019/03/01</div>
<div class="c  num" style="left:475.6px;top:121.51px;width:33.9px;text-align:right">5</div>
<div class="c  u" style="left:509.5px;top:121.51px;width:33.3px;text-align:center">盒</div>
<div class="c " style="left:434.4px;top:130.07px;width:41.2px;text-align:left">2019/03/01</div>
<div class="c  num" style="left:475.6px;top:130.07px;width:33.9px;text-align:right">50</div>
<div class="c  u" style="left:509.5px;top:130.07px;width:33.3px;text-align:center">瓶</div>
<div class="c " style="left:434.4px;top:138.62px;width:41.2px;text-align:left">2019/03/01</div>
<div class="c  num" style="left:475.6px;top:138.62px;width:33.9px;text-align:right">10</div>
<div class="c  u" style="left:509.5px;top:138.62px;width:33.3px;text-align:center">盒</div>
<div class="c " style="left:434.4px;top:147.18px;width:41.2px;text-align:left">2019/03/01</div>
<div class="c  num" style="left:475.6px;top:147.18px;width:33.9px;text-align:right">100</div>
<div class="c  u" style="left:509.5px;top:147.18px;width:33.3px;text-align:center">盒</div>
<div class="c " style="left:434.4px;top:155.74px;width:41.2px;text-align:left">2019/03/01</div>
<div class="c  num" style="left:475.6px;top:155.74px;width:33.9px;text-align:right">30</div>
<div class="c  u" style="left:509.5px;top:155.74px;width:33.3px;text-align:center">盒</div>
<div class="c " style="left:434.4px;top:164.29px;width:41.2px;text-align:left">2019/03/01</div>
<div class="c  num" style="left:475.6px;top:164.29px;width:33.9px;text-align:right">40</div>
<div class="c  u" style="left:509.5px;top:164.29px;width:33.3px;text-align:center">盒</div>
<div class="c " style="left:434.4px;top:172.85px;width:41.2px;text-align:left">2019/03/01</div>
<div class="c  num" style="left:475.6px;top:172.85px;width:33.9px;text-align:right">0</div>
<div class="c  u" style="left:509.5px;top:172.85px;width:33.3px;text-align:center">支</div>
<div class="c " style="left:434.4px;top:181.40px;width:41.2px;text-align:left">2019/03/01</div>
<div class="c  num" style="left:475.6px;top:181.40px;width:33.9px;text-align:right">40</div>
<div class="c  u" style="left:509.5px;top:181.40px;width:33.3px;text-align:center">盒</div>
<div class="c " style="left:434.4px;top:189.96px;width:41.2px;text-align:left">2019/03/01</div>
<div class="c  num" style="left:475.6px;top:189.96px;width:33.9px;text-align:right">100</div>
<div class="c  u" style="left:509.5px;top:189.96px;width:33.3px;text-align:center">盒</div>
<div class="c " style="left:434.4px;top:198.51px;width:41.2px;text-align:left">2019/03/01</div>
<div class="c  num" style="left:475.6px;top:198.51px;width:33.9px;text-align:right">600</div>
<div class="c  u" style="left:509.5px;top:198.51px;width:33.3px;text-align:center">盒</div>
<div class="bh" style="left:434.4px;top:9.85px;width:108.9px"></div>
<div class="bh" style="left:434.4px;top:18.41px;width:108.9px"></div>
<div class="bh" style="left:434.4px;top:26.96px;width:108.9px"></div>
<div class="bh" style="left:434.4px;top:35.52px;width:108.9px"></div>
<div class="bh" style="left:434.4px;top:44.07px;width:108.9px"></div>
<div class="bh" style="left:434.4px;top:52.63px;width:108.9px"></div>
<div class="bh" style="left:434.4px;top:61.18px;width:108.9px"></div>
<div class="bh" style="left:434.4px;top:69.73px;width:108.9px"></div>
<div class="bh" style="left:434.4px;top:78.29px;width:108.9px"></div>
<div class="bh" style="left:434.4px;top:86.85px;width:108.9px"></div>
<div class="bh" style="left:434.4px;top:95.40px;width:108.9px"></div>
<div class="bh" style="left:434.4px;top:103.95px;width:108.9px"></div>
<div class="bh" style="left:434.4px;top:112.51px;width:108.9px"></div>
<div class="bh" style="left:434.4px;top:121.07px;width:108.9px"></div>
<div class="bh" style="left:434.4px;top:129.62px;width:108.9px"></div>
<div class="bh" style="left:434.4px;top:138.18px;width:108.9px"></div>
<div class="bh" style="left:434.4px;top:146.73px;width:108.9px"></div>
<div class="bh" style="left:434.4px;top:155.29px;width:108.9px"></div>
<div class="bh" style="left:434.4px;top:163.84px;width:108.9px"></div>
<div class="bh" style="left:434.4px;top:172.40px;width:108.9px"></div>
<div class="bh" style="left:434.4px;top:180.95px;width:108.9px"></div>
<div class="bh" style="left:434.4px;top:189.51px;width:108.9px"></div>
<div class="bh" style="left:434.4px;top:198.06px;width:108.9px"></div>
<div class="bh" style="left:434.4px;top:206.62px;width:108.9px"></div>
<div class="bv" style="left:433.95px;top:10.30px;height:196.76px"></div>
<div class="bv" style="left:475.15px;top:10.30px;height:196.76px"></div>
<div class="bv" style="left:509.05px;top:10.30px;height:196.76px"></div>
<div class="bv" style="left:542.35px;top:10.30px;height:196.76px"></div>
<div class="c hc" style="left:434.4px;top:241.28px;width:41.2px;text-align:center">开单日期</div>
<div class="c hc " style="left:475.6px;top:241.28px;width:33.9px;text-align:center">数量</div>
<div class="c hc " style="left:509.5px;top:241.28px;width:33.3px;text-align:center">单位</div>
<div class="c " style="left:434.4px;top:249.84px;width:41.2px;text-align:left">2019/03/01</div>
<div class="c  num" style="left:475.6px;top:249.84px;width:33.9px;text-align:right">35</div>
<div class="c  u" style="left:509.5px;top:249.84px;width:33.3px;text-align:center">盒</div>
<div class="c " style="left:434.4px;top:258.39px;width:41.2px;text-align:left">2019/03/01</div>
<div class="c  num" style="left:475.6px;top:258.39px;width:33.9px;text-align:right">4</div>
<div class="c  u" style="left:509.5px;top:258.39px;width:33.3px;text-align:center">盒</div>
<div class="c " style="left:434.4px;top:266.95px;width:41.2px;text-align:left">2019/03/01</div>
<div class="c  num" style="left:475.6px;top:266.95px;width:33.9px;text-align:right">0</div>
<div class="c  u" style="left:509.5px;top:266.95px;width:33.3px;text-align:center">盒</div>
<div class="c " style="left:434.4px;top:275.50px;width:41.2px;text-align:left">2019/03/01</div>
<div class="c  num" style="left:475.6px;top:275.50px;width:33.9px;text-align:right">400</div>
<div class="c  u" style="left:509.5px;top:275.50px;width:33.3px;text-align:center">盒</div>
<div class="bh" style="left:434.4px;top:240.83px;width:108.9px"></div>
<div class="bh" style="left:434.4px;top:249.39px;width:108.9px"></div>
<div class="bh" style="left:434.4px;top:257.94px;width:108.9px"></div>
<div class="bh" style="left:434.4px;top:266.50px;width:108.9px"></div>
<div class="bh" style="left:434.4px;top:275.06px;width:108.9px"></div>
<div class="bv" style="left:433.95px;top:241.28px;height:40.72px"></div>
<div class="bv" style="left:475.15px;top:241.28px;height:40.72px"></div>
<div class="bv" style="left:509.05px;top:241.28px;height:40.72px"></div>
<div class="bv" style="left:542.35px;top:241.28px;height:40.72px"></div>
<div class="pg" style="left:63.9px;top:220.8px;width:80px;height:24px;font-size:14.6px;word-spacing:2.3px">第 1 页</div>
<div class="pg" style="left:256.7px;top:220.5px;width:80px;height:24px;font-size:17.5px;word-spacing:3.0px">第 3 页</div>
<div class="pg" style="left:466.3px;top:220.5px;width:80px;height:24px;font-size:17.5px;word-spacing:3.0px">第 5 页</div>
<div class="bl" style="left:15.4px;top:10.300000000000011px;width:1.7px;height:271.7px;background:#2424c4"></div>
<div class="bl" style="left:15.8px;top:9.700000000000012px;width:574.2px;height:1.4px;background:#1c1cb4"></div>
<div class="bl" style="left:190.4px;top:10.300000000000011px;width:2.2px;height:271.7px"></div>
<div class="bl" style="left:399.59999999999997px;top:10.300000000000011px;width:2.2px;height:271.7px"></div>
</div>

<!-- vertical scrollbar -->
<div id="vscroll">
  <div style="left:0;top:0;width:15px;height:2.5px;background:#e6e6e6"></div>
  <div class="sbtn" style="left:1.9px;top:2.6px;width:11.6px;height:10.6px"></div>
  <svg style="left:4.4px;top:5.6px" width="7" height="5" viewBox="0 0 7 5"><path d="M.3 4.4h6.4L3.5.8z" fill="#666"/></svg>
  <div class="sbtn" style="left:2.2px;top:13.2px;width:11.2px;height:103px"></div>
  <div class="sbtn" style="left:2.6px;top:271.6px;width:10.8px;height:10.4px"></div>
  <svg style="left:4.6px;top:274.6px" width="7" height="5" viewBox="0 0 7 5"><path d="M.3.6h6.4L3.5 4.2z" fill="#666"/></svg>
</div>

<!-- ===== sheet tab bar ===== -->
<div id="tabbar">
  <svg style="left:20px;top:5px" width="30" height="9" viewBox="0 0 30 9"><path d="M6 1.2v6.4L2.8 4.4zM23.6 1.2v6.4L27 4.4z" fill="#cbcbcb"/></svg>
  <div style="left:78.6px;top:3px;width:1px;height:14px;background:#ababab"></div>
  <div class="t ct" style="left:78.6px;top:3.5px;width:39px;font-size:10px;color:#444">一月</div>
  <div style="left:117.4px;top:3px;width:1px;height:14px;background:#ababab"></div>
  <div class="t ct" style="left:118px;top:3.5px;width:39px;font-size:10px;color:#444">二月</div>
  <div style="left:156.6px;top:-1px;width:39px;height:20.2px;background:#fff;border-bottom:1.7px solid #217346;border-left:1px solid #c6c6c6;border-right:1px solid #c6c6c6"></div>
  <div class="t ct" style="left:156.6px;top:3.5px;width:38.6px;font-size:10px;color:#217346">三月</div>
  <svg style="left:221.5px;top:3px" width="13" height="13" viewBox="0 0 13 13" fill="none" stroke="#6b6b6b" stroke-width="1"><circle cx="6.5" cy="6.5" r="5.6"/><path d="M6.5 3.6v5.8M3.6 6.5h5.8"/></svg>
  <svg style="left:362.7px;top:5.3px" width="3" height="9" viewBox="0 0 3 9" fill="#bcbcbc"><circle cx="1.5" cy="1.5" r=".8"/><circle cx="1.5" cy="4.6" r=".8"/><circle cx="1.5" cy="7.8" r=".8"/></svg>
  <!-- horizontal scrollbar -->
  <div style="left:376.9px;top:5.3px;width:213.1px;height:11px;background:#d2d2d2"></div>
  <div class="sbtn" style="left:376.9px;top:5.3px;width:11.3px;height:11px"></div>
  <svg style="left:380.2px;top:7.4px" width="5" height="7" viewBox="0 0 5 7"><path d="M4.4.3v6.4L.8 3.5z" fill="#666"/></svg>
  <div class="sbtn" style="left:388.8px;top:5.3px;width:144.2px;height:11px"></div>
  <div class="sbtn" style="left:578.6px;top:5.3px;width:11.4px;height:11px"></div>
  <svg style="left:582.2px;top:7.4px" width="5" height="7" viewBox="0 0 5 7"><path d="M.6.3v6.4L4.2 3.5z" fill="#666"/></svg>
</div>

<!-- ===== status bar ===== -->
<div id="status">
  <div class="t" style="left:6.2px;top:3.3px;font-size:9.3px;color:#3c3c3c">就绪</div>
  <svg style="left:40.2px;top:3.7px" width="11" height="11" viewBox="0 0 11 11" fill="none" stroke="#6b6b6b" stroke-width="0.9"><rect x="1.6" y="2.4" width="8.6" height="7.8" fill="#fff"/><path d="M1.6 5h8.6M4.4 5v5.2M1.6 7.6h8.6" stroke-width="0.7"/><circle cx="2.4" cy="2.4" r="2.1" fill="#666" stroke="none"/></svg>
  <div style="left:425.6px;top:0;width:29px;height:17.5px;background:#c6c6c6"></div>
  <svg style="left:374px;top:4.0px" width="12" height="10" viewBox="0 0 12 10" fill="#fff" stroke="#6b6b6b" stroke-width="0.8"><rect x=".5" y=".5" width="11" height="9"/><path d="M.5 3.5h11M.5 6.5h11M4.2.5v9M7.8.5v9"/></svg>
  <svg style="left:403.5px;top:4.0px" width="12" height="10" viewBox="0 0 12 10" fill="#fff" stroke="#6b6b6b" stroke-width="0.8"><rect x=".5" y=".5" width="11" height="9"/><rect x="3.4" y="2.4" width="5.2" height="5.2"/><path d="M5 4h2M5 5.8h2" stroke-width="0.6"/></svg>
  <svg style="left:434px;top:4.0px" width="12" height="10" viewBox="0 0 12 10" fill="#fff" stroke="#555" stroke-width="0.8"><rect x=".5" y=".5" width="11" height="9"/><path d="M6 .5v5.2h5.5M.5 5.7H6"/></svg>
  <div style="left:458px;top:8.1px;width:6px;height:1.6px;background:#555"></div>
  <div style="left:468px;top:8.7px;width:78px;height:1px;background:#a2a2a2"></div>
  <div style="left:505.4px;top:6.3px;width:1px;height:6px;background:#a2a2a2"></div>
  <div style="left:487.8px;top:4.1px;width:3.4px;height:10px;background:#555"></div>
  <div style="left:547.4px;top:8.5px;width:7px;height:1.6px;background:#555"></div>
  <div style="left:550.1px;top:5.8px;width:1.6px;height:7px;background:#555"></div>
  <div class="t" style="left:566px;top:4.1px;font-size:9.8px;color:#4a4a4a">60%</div>
</div>
</body>
</html>
